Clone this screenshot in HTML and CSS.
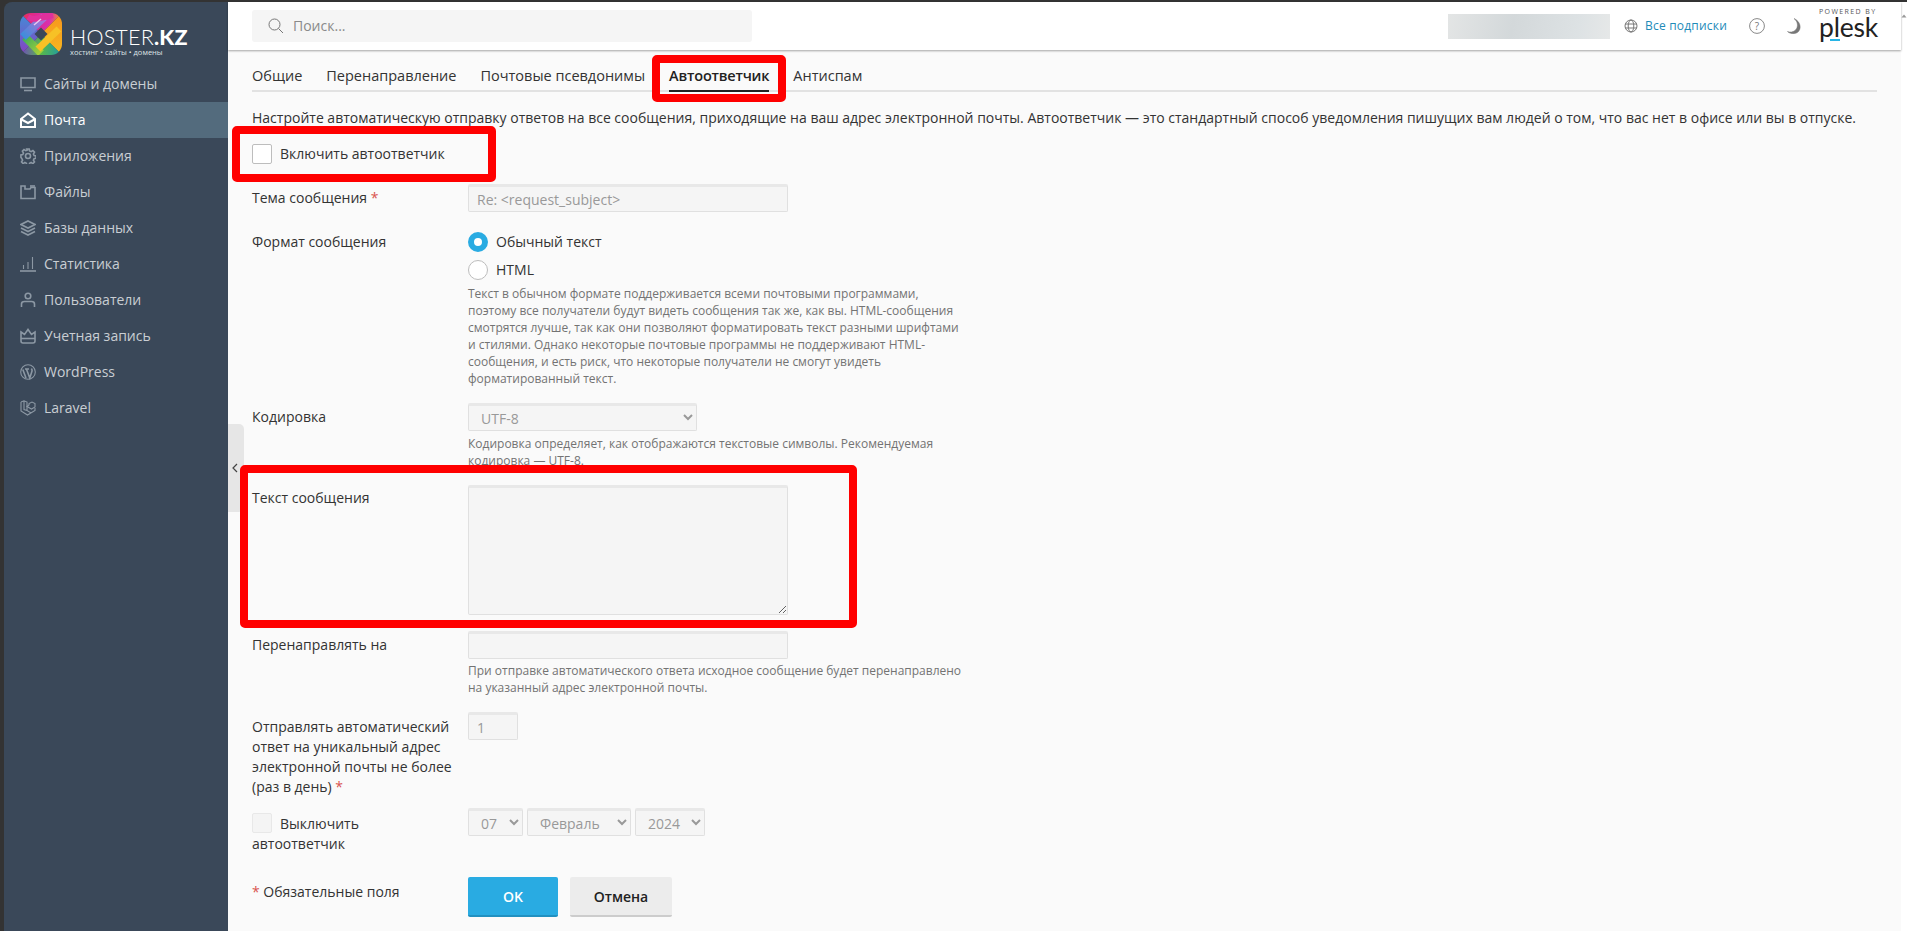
FILE: index.html
```html
<!DOCTYPE html>
<html lang="ru">
<head>
<meta charset="utf-8">
<title>Автоответчик</title>
<link rel="stylesheet" href="styles.css">
</head>
<body>
<div class="app">
  <aside class="sidebar">
    <div class="logo">
      <svg class="logo-mark" viewBox="0 0 42 42" width="42" height="42">
        <defs>
          <clipPath id="lc"><rect width="42" height="42" rx="11"/></clipPath>
          <linearGradient id="gTop" x1="0" y1="0" x2="1" y2="0"><stop offset="0" stop-color="#e8304f"/><stop offset=".35" stop-color="#dd2a8e"/><stop offset=".7" stop-color="#d92fb0"/><stop offset="1" stop-color="#f59a1c"/></linearGradient>
          <linearGradient id="gRight" x1="0" y1="0" x2="0" y2="1"><stop offset="0" stop-color="#f7941c"/><stop offset="1" stop-color="#f8b820"/></linearGradient>
          <linearGradient id="gBottom" x1="1" y1="0" x2="0" y2="0"><stop offset="0" stop-color="#1d9aa8"/><stop offset=".5" stop-color="#58b84a"/><stop offset="1" stop-color="#6f45c2"/></linearGradient>
          <linearGradient id="gLeft" x1="0" y1="0" x2="0" y2="1"><stop offset="0" stop-color="#3f8fd8"/><stop offset="1" stop-color="#8a3fc0"/></linearGradient>
          <linearGradient id="gDiag" x1="0" y1="1" x2="1" y2="0"><stop offset="0" stop-color="#3a8fdc"/><stop offset="1" stop-color="#b46ad6"/></linearGradient>
          <linearGradient id="gGreen" x1="0" y1="0" x2="1" y2="1"><stop offset="0" stop-color="#3fae5a"/><stop offset="1" stop-color="#a8d038"/></linearGradient>
        </defs>
        <g clip-path="url(#lc)">
          <path d="M0 0H42L21 21z" fill="url(#gTop)"/>
          <path d="M42 0V42L21 21z" fill="url(#gRight)"/>
          <path d="M42 42H0L21 21z" fill="url(#gBottom)"/>
          <path d="M0 0V42L21 21z" fill="url(#gLeft)"/>
          <path d="M5 24 14 33 21 40" fill="none" stroke="url(#gGreen)" stroke-width="8"/>
          <path d="M3 24 24 4" fill="none" stroke="url(#gDiag)" stroke-width="8"/>
          <path d="M39 16 18 36" fill="none" stroke="#f7c126" stroke-width="7"/>
          <path d="M8 4 Q 13 7 20 5 L 33 2" fill="none" stroke="#e0309c" stroke-width="6"/>
          <path d="M14 12 21 6" fill="none" stroke="#e9c8ee" stroke-width="1.500"/>
        </g>
        <path d="M21 14.500 27.500 21 21 27.500 14.500 21Z" fill="#3a4859"/>
      </svg>
      <div class="logo-text">
        <div class="logo-name">HOSTER<b>.KZ</b></div>
        <div class="logo-sub">хостинг • сайты • домены</div>
      </div>
    </div>
    <nav class="nav">
      <a class="nav-item"><svg class="ico" viewBox="0 0 16 16"><path d="M1 2h14v9.500H1z"/><path d="M4 14.500h8"/></svg>Сайты и домены</a>
      <a class="nav-item active"><svg class="ico" viewBox="0 0 16 16"><path d="M1 7 8 1.500 15 7v8H1z"/><path d="M1.500 7.500 8 11l6.500-3.500"/></svg>Почта</a>
      <a class="nav-item"><svg class="ico" viewBox="0 0 16 16"><path d="M6.800 1h2.400l.4 2 1.500.7 1.800-1.100 1.600 1.600-1.100 1.800.7 1.500 1.900.4v2.400l-1.900.4-.7 1.500 1.100 1.800-1.600 1.600-1.800-1.100-1.500.7-.4 1.800H6.800l-.4-1.800-1.500-.7-1.800 1.100-1.600-1.600 1.100-1.800-.7-1.500L.9 9.300V6.900l1.900-.4.700-1.500-1.100-1.800 1.600-1.600 1.800 1.100 1.500-.7z"/><circle cx="8" cy="8" r="2.500"/></svg>Приложения</a>
      <a class="nav-item"><svg class="ico" viewBox="0 0 16 16"><path d="M1 2v12.500h14V3.500h-4l-1 1.500H5V2z"/><path d="M10 2h5"/></svg>Файлы</a>
      <a class="nav-item"><svg class="ico" viewBox="0 0 16 16"><path d="M8 1 15 4.500 8 8 1 4.500z"/><path d="M1 8l7 3.500L15 8"/><path d="M1 11.500 8 15l7-3.500"/></svg>Базы данных</a>
      <a class="nav-item"><svg class="ico" viewBox="0 0 16 16"><path d="M0 15h16"/><path class="thin" d="M3.500 13V9M8 13V6M12.500 13V1"/></svg>Статистика</a>
      <a class="nav-item"><svg class="ico" viewBox="0 0 16 16"><circle cx="8" cy="4" r="2.800"/><path d="M1.500 15v-3q0-2.500 3-2.500h7q3 0 3 2.500v3"/></svg>Пользователи</a>
      <a class="nav-item"><svg class="ico" viewBox="0 0 16 16"><path d="M1 4l3.500 2.500L8 1.500l3.500 5L15 4v9q0 2-2 2H3q-2 0-2-2z"/><path d="M1 10.500h14"/></svg>Учетная запись</a>
      <a class="nav-item"><svg class="ico" viewBox="0 0 16 16"><circle class="thin" cx="8" cy="8" r="7.300"/><path d="M2.800 5.500 6 14M5 5h4M6.500 5.200 9.800 14l2-6.200q.7-2-.5-3.200"/></svg>WordPress</a>
      <a class="nav-item"><svg class="ico" viewBox="0 0 16 16"><path class="thin" d="M1 2 4 .8l3 1.200v8.500l4.500 2.700M1 2v9l6.500 4 7.500-4.500V8M4 .8v8.700l3 1"/><path class="thin" d="M7 6.500 11.500 9 15 7V3.500l-3-1.500-3 1.500V5z"/></svg>Laravel</a>
    </nav>
  </aside>
  <div class="main">
    <header class="topbar">
      <div class="search">
        <svg class="search-ico" viewBox="0 0 16 16"><circle cx="6.500" cy="6.500" r="5.500"/><path d="M10.500 10.500 15 15"/></svg>
        <span>Поиск...</span>
      </div>
      <div class="top-right">
        <div class="blurred"></div>
        <a class="subs">
          <svg class="globe" viewBox="0 0 14 14"><circle cx="7" cy="7" r="6"/><ellipse cx="7" cy="7" rx="2.800" ry="6"/><path d="M1 5h12M1 9h12"/></svg>
          Все подписки
        </a>
        <svg class="help" viewBox="0 0 16 16"><circle cx="8" cy="8" r="7.400"/><text x="8" y="11.500" text-anchor="middle">?</text></svg>
        <svg class="moon" viewBox="0 0 14 16"><path d="M7 .5C11 3.500 11.500 9 8.500 12 6 14.300 3 14.500.5 13.500 3 16 8 16.500 11 14 14.500 11 14 3.500 7 .5z"/></svg>
        <div class="plesk">
          <div class="plesk-by">POWERED BY</div>
          <div class="plesk-name">plesk</div>
        </div>
      </div>
    </header>
    <main class="content">
      <ul class="tabs">
        <li class="tab">Общие</li>
        <li class="tab">Перенаправление</li>
        <li class="tab">Почтовые псевдонимы</li>
        <li class="tab current">Автоответчик</li>
        <li class="tab">Антиспам</li>
      </ul>
      <p class="intro">Настройте автоматическую отправку ответов на все сообщения, приходящие на ваш адрес электронной почты. Автоответчик — это стандартный способ уведомления пишущих вам людей о том, что вас нет в офисе или вы в отпуске.</p>
      <label class="enable"><input class="check" type="checkbox">Включить автоответчик</label>

      <div class="row first">
        <div class="lbl">Тема сообщения <span class="req">*</span></div>
        <div class="fld"><input class="inp wide" type="text" disabled value="Re: &lt;request_subject&gt;"></div>
      </div>
      <div class="row">
        <div class="lbl">Формат сообщения</div>
        <div class="fld">
          <label class="radio-line"><input class="radio on" type="radio" name="f" checked>Обычный текст</label>
          <label class="radio-line"><input class="radio" type="radio" name="f">HTML</label>
          <p class="hint">Текст в обычном формате поддерживается всеми почтовыми программами, поэтому все получатели будут видеть сообщения так же, как вы. HTML-сообщения смотрятся лучше, так как они позволяют форматировать текст разными шрифтами и стилями. Однако некоторые почтовые программы не поддерживают HTML-сообщения, и есть риск, что некоторые получатели не смогут увидеть форматированный текст.</p>
        </div>
      </div>
      <div class="row">
        <div class="lbl">Кодировка</div>
        <div class="fld">
          <select class="sel enc" disabled><option>UTF-8</option></select>
          <p class="hint">Кодировка определяет, как отображаются текстовые символы. Рекомендуемая кодировка — UTF-8.</p>
        </div>
      </div>
      <div class="row">
        <div class="lbl tight">Текст сообщения</div>
        <div class="fld"><textarea class="area" disabled></textarea></div>
      </div>
      <div class="row">
        <div class="lbl">Перенаправлять на</div>
        <div class="fld">
          <input class="inp wide fwd" type="text" disabled>
          <p class="hint">При отправке автоматического ответа исходное сообщение будет перенаправлено на указанный адрес электронной почты.</p>
        </div>
      </div>
      <div class="row">
        <div class="lbl low">Отправлять автоматический ответ на уникальный адрес электронной почты не более (раз в день) <span class="req">*</span></div>
        <div class="fld"><input class="inp num" type="text" disabled value="1"></div>
      </div>
      <div class="row date-row">
        <div class="lbl lower"><input class="check dim" type="checkbox" disabled>Выключить автоответчик</div>
        <div class="fld dates">
          <select class="sel day" disabled><option>07</option></select>
          <select class="sel month" disabled><option>Февраль</option></select>
          <select class="sel year" disabled><option>2024</option></select>
        </div>
      </div>
      <div class="row btn-row">
        <div class="lbl low"><span class="req">*</span> Обязательные поля</div>
        <div class="fld btns">
          <button class="btn ok" type="button">OK</button>
          <button class="btn cancel" type="button">Отмена</button>
        </div>
      </div>
    </main>
  </div>
  <div class="scrollbar"><svg class="scroll-up" viewBox="0 0 6 4"><path d="M3 .5 5.500 3.500H.5z"/></svg></div>

  <div class="handle"><svg viewBox="0 0 6 10"><path d="M5 1 1 5l4 4"/></svg></div>
  <div class="mark mark-tab"></div>
  <div class="mark mark-enable"></div>
  <div class="mark mark-text"></div>
</div>
</body>
</html>
```
FILE: styles.css
```css
* { box-sizing: border-box; }
html, body { margin: 0; height: 100%; overflow: hidden; }
body { background: #333; font: 14px/20px "Open Sans", "Liberation Sans", sans-serif; color: #333; }

.app { position: relative; display: flex; height: 100%; padding: 2px 0 0 4px; }

/* sidebar */
.sidebar { width: 224px; flex: none; background: #3a4859; border-top-left-radius: 8px; color: #c9ced3; }
.logo { display: flex; height: 64px; padding: 11px 0 0 16px; gap: 8px; }
.logo-mark { flex: none; }
.logo-text { padding-top: 12px; color: #fff; }
.logo-name { font: 300 21.500px/25px Lato, "Open Sans", sans-serif; letter-spacing: .2px; white-space: nowrap; }
.logo-name b { font-weight: 900; }
.logo-sub { font-size: 7.500px; line-height: 9px; margin-top: -2px; color: #dfe3e6; white-space: nowrap; }
.nav-item { display: flex; align-items: center; height: 36px; padding-left: 16px; gap: 8px; }
.nav-item.active { background: #536b7d; color: #fff; }
.ico { width: 16px; height: 16px; flex: none; fill: none; stroke: #8c98a4; stroke-width: 1.600; }
.ico .thin { stroke-width: 1.100; }
.active .ico { stroke: #fff; stroke-width: 2; }

/* top bar */
.main { flex: 1; min-width: 0; display: flex; flex-direction: column; background: #fafafa; }
.topbar { flex: none; height: 48px; padding: 8px 24px 0; display: flex; justify-content: space-between; background: #fff; box-shadow: 0 1px 2px rgba(0,0,0,.35); position: relative; }
.search { width: 500px; height: 32px; display: flex; align-items: center; gap: 9px; padding-left: 16px; background: #f5f5f5; border-radius: 3px; color: #8a8a8a; }
.search-ico { width: 16px; height: 16px; fill: none; stroke: #777; stroke-width: 1; }
.top-right { display: flex; align-items: flex-start; }
.blurred { width: 162px; height: 25px; margin-top: 4px; background: linear-gradient(100deg, #e3e5e5, #d3d8da 40%, #dde2e4 80%, #e6e8e8); }
.subs { display: flex; align-items: center; gap: 7px; margin: 6px 0 0 14px; font-size: 12px; letter-spacing: .2px; color: #1e8bb9; white-space: nowrap; }
.globe { width: 14px; height: 14px; fill: none; stroke: #777; stroke-width: 1; }
.help { width: 16px; height: 16px; margin: 8px 0 0 22px; fill: none; stroke: #888; stroke-width: 1; }
.help text { font: 10px "Open Sans", sans-serif; fill: #777; stroke: none; }
.moon { width: 14px; height: 16px; margin: 8px 0 0 22px; fill: #777; stroke: #777; stroke-width: .5; }
.plesk { width: 58px; margin: -2px 0 0 18px; color: #222; }
.plesk-by { font-size: 7px; line-height: 8px; letter-spacing: 1.400px; white-space: nowrap; color: #555; }
.plesk-name { position: relative; font: 400 26.500px/22px Lato, sans-serif; letter-spacing: -.2px; }
.plesk-name::after { content: ""; position: absolute; left: 11px; top: 23px; width: 10px; height: 2px; background: #28b5e6; }

/* content */
.content { flex: 1; padding: 0 24px; }
.tabs { display: flex; gap: 24px; list-style: none; margin: 0; padding: 16px 0 0; box-shadow: inset 0 -2px #e2e2e2; font-size: 14.500px; }
.tab { height: 26px; color: #333; }
.tab.current { font-weight: 600; letter-spacing: -.2px; color: #222; border-bottom: 2px solid #222; }
.intro { margin: 16px 0 0; white-space: nowrap; }
.enable { display: flex; align-items: center; gap: 8px; margin-top: 16px; height: 20px; }
.check { appearance: none; width: 20px; height: 20px; margin: 0; flex: none; background: #fff; border: 1px solid #bdbdbd; border-radius: 2px; }
.check.dim { display: inline-block; vertical-align: top; margin: -1px 8px 0 0; background: #f4f4f4; border-color: #e8e8e8; }

.row { display: grid; grid-template-columns: 216px 1fr; margin-top: 16px; }
.row.first { margin-top: 20px; }
.row.date-row { margin-top: 11px; }
.row.btn-row { margin-top: 23px; }
.lbl { padding: 4px 16px 0 0; }
.lbl.tight { padding-top: 3px; }
.lbl.low { padding-top: 5px; }
.lbl.lower { padding-top: 6px; }
.req { color: #d9534f; }
.fld { min-width: 0; }
.inp, .sel, .area { display: block; margin: 0; font: 14px/20px "Open Sans", sans-serif; color: #999; background: #f5f5f5; border: 1px solid #e0e0e0; border-top: 3px solid #e8e8e8; border-radius: 2px; height: 28px; }
.inp { padding: 0 8px; }
.wide { width: 320px; }
.fwd { margin-bottom: 2px; }
.num { width: 50px; }
.area { width: 320px; height: 130px; resize: both; }
.sel { padding: 0 0 0 8px; opacity: 1; }
.enc { width: 229px; margin-bottom: 3px; }
.radio-line { display: flex; align-items: center; gap: 8px; height: 28px; }
.radio { appearance: none; width: 20px; height: 20px; margin: 0; background: #fff; border: 1px solid #bdbdbd; border-radius: 50%; }
.radio.on { background: #fff; border: 6px solid #29abe2; }
.hint { width: 500px; margin: 0; font-size: 12px; line-height: 17px; color: #737373; padding-top: 1px; }
.dates { display: flex; gap: 4px; }
.day { width: 55px; }
.month { width: 104px; }
.year { width: 70px; }
.btns { display: flex; gap: 12px; }
.btn { height: 40px; padding: 0; font: 600 14px "Open Sans", sans-serif; border: 0; border-radius: 2px; }
.ok { width: 90px; color: #fff; background: #29abe2; border-bottom: 2px solid #2190c0; }
.cancel { width: 102px; color: #222; background: #ececec; border-bottom: 2px solid #ccc; }

.scrollbar { width: 6px; flex: none; background: #fff; }
.scroll-up { display: block; width: 6px; height: 4px; margin-top: 12px; fill: #999; }

/* overlays */
.handle { position: absolute; left: 228px; top: 424px; width: 16px; height: 88px; background: #e6e6e6; border-radius: 0 5px 5px 0; }
.handle svg { position: absolute; left: 4px; top: 39px; width: 6px; height: 10px; fill: none; stroke: #444; stroke-width: 1.200; }
.mark { position: absolute; border: 8px solid #f00; border-radius: 5px; }
.mark-tab { left: 652px; top: 55px; width: 134px; height: 47px; }
.mark-enable { left: 232px; top: 126px; width: 264px; height: 56px; }
.mark-text { left: 240px; top: 465px; width: 617px; height: 163px; }
```
